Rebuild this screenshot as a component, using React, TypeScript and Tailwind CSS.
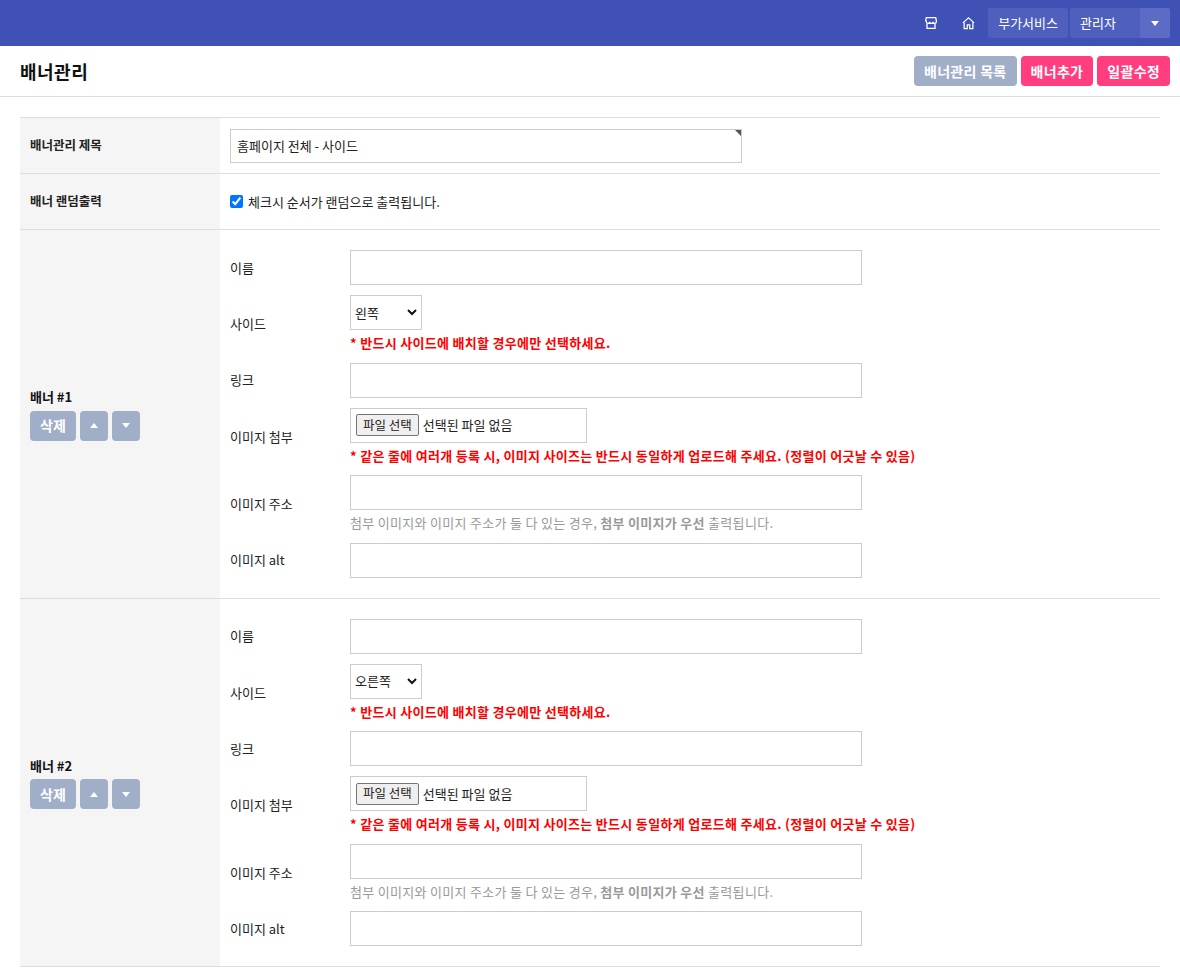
const font = { fontFamily: '"Noto Sans CJK KR", "Noto Sans", sans-serif' }

function Field({ label, children }: { label: string; children: React.ReactNode }) {
  return (
    <div className="flex items-center">
      <div className="w-[120px] text-[13px] text-[#222]">{label}</div>
      <div className="flex flex-col">{children}</div>
    </div>
  )
}

const inputCls = 'w-[512px] h-[35px] border border-[#ccc] bg-white'

function Banner({ n, side }: { n: number; side: string }) {
  return (
    <div className="flex border-b border-[#ddd]">
      <div className="w-[200px] bg-[#f5f5f5] flex flex-col justify-center px-[10px]">
        <div className="text-[13px] font-bold text-[#111]">배너 #{n}</div>
        <div className="flex gap-1 mt-1">
          <button className="h-[30px] px-[10px] rounded bg-[#a0aec8] text-white text-[14px] font-bold">삭제</button>
          <button className="h-[30px] w-[28px] rounded bg-[#a0aec8] text-white flex items-center justify-center">
            <svg width="8" height="5" viewBox="0 0 8 5"><path d="M0 5L4 0L8 5Z" fill="white" /></svg>
          </button>
          <button className="h-[30px] w-[28px] rounded bg-[#a0aec8] text-white flex items-center justify-center">
            <svg width="8" height="5" viewBox="0 0 8 5"><path d="M0 0L4 5L8 0Z" fill="white" /></svg>
          </button>
        </div>
      </div>
      <div className="flex-1 px-[10px] pt-[20px] pb-[20px] flex flex-col gap-[10px]">
        <Field label="이름"><div className={inputCls} /></Field>
        <Field label="사이드">
          <div className="w-[72px] h-[35px] border border-[#ccc] bg-white flex items-center justify-between px-[4px] text-[13px]">
            <span>{side}</span>
            <svg width="10" height="7" viewBox="0 0 10 7"><path d="M1 1L5 5L9 1" stroke="#111" strokeWidth="2" fill="none" /></svg>
          </div>
          <div className="text-[13px] tracking-[0.3px] font-bold text-[#f00] mt-[3px]">* 반드시 사이드에 배치할 경우에만 선택하세요.</div>
        </Field>
        <Field label="링크"><div className={inputCls} /></Field>
        <Field label="이미지 첨부">
          <div className="w-[237px] h-[35px] border border-[#ccc] bg-white flex items-center px-[5px] gap-[4px] text-[13px]">
            <span className="border border-[#767676] bg-[#efefef] rounded-[2px] px-[6px] h-[22px] flex items-center text-[12.5px]">파일 선택</span>
            <span>선택된 파일 없음</span>
          </div>
          <div className="text-[13px] tracking-[0.3px] font-bold text-[#f00] mt-[3px]">* 같은 줄에 여러개 등록 시, 이미지 사이즈는 반드시 동일하게 업로드해 주세요. (정렬이 어긋날 수 있음)</div>
        </Field>
        <Field label="이미지 주소">
          <div className={inputCls} />
          <div className="text-[13px] tracking-[0.3px] text-[#999] mt-[3px]">첨부 이미지와 이미지 주소가 둘 다 있는 경우, <b>첨부 이미지가 우선</b> 출력됩니다.</div>
        </Field>
        <Field label="이미지 alt"><div className={inputCls} /></Field>
      </div>
    </div>
  )
}

export default function App() {
  return (
    <div style={font} className="min-h-[977px] bg-white text-[#222]">
      <div className="h-[46px] bg-[#3f51b5] flex items-center justify-end pr-[10px] gap-[2px]">
        <svg width="16" height="16" viewBox="0 0 24 24" fill="none" stroke="white" strokeWidth="2" className="mr-[20px]"><path d="M4 8l1-4h14l1 4v2a2.5 2.5 0 0 1-5 0a2.5 2.5 0 0 1-5 0a2.5 2.5 0 0 1-5 0Z" /><path d="M6 13v7h12v-7" /></svg>
        <svg width="15" height="15" viewBox="0 0 24 24" fill="none" stroke="white" strokeWidth="2" className="mr-[10px]"><path d="M3 11l9-8 9 8" /><path d="M5 10v10h5v-6h4v6h5V10" /></svg>
        <div className="h-[30px] px-[10px] bg-[#4e5fbd] rounded-[2px] text-white text-[13px] flex items-center">부가서비스</div>
        <div className="h-[30px] flex rounded-[2px] overflow-hidden">
          <div className="w-[70px] bg-[#4e5fbd] text-white text-[13px] flex items-center px-[10px]">관리자</div>
          <div className="w-[30px] bg-[#5c6bc6] flex items-center justify-center">
            <svg width="8" height="5" viewBox="0 0 8 5"><path d="M0 0L4 5L8 0Z" fill="white" /></svg>
          </div>
        </div>
      </div>
      <div className="h-[51px] border-b border-[#ddd] flex items-center justify-between px-[20px]">
        <h1 className="text-[18px] tracking-[0.5px] font-bold text-[#111]">배너관리</h1>
        <div className="flex gap-[4px] -mr-[10px]">
          <button className="h-[30px] px-[10px] rounded bg-[#a0aec8] text-white text-[14px] tracking-[0.3px] font-bold">배너관리 목록</button>
          <button className="h-[30px] px-[10px] rounded bg-[#ff3d7f] text-white text-[14px] tracking-[0.3px] font-bold">배너추가</button>
          <button className="h-[30px] px-[10px] rounded bg-[#ff3d7f] text-white text-[14px] tracking-[0.3px] font-bold">일괄수정</button>
        </div>
      </div>
      <div className="mx-[20px] mt-[20px] border-t border-[#ddd]">
        <div className="flex border-b border-[#ddd] h-[56px]">
          <div className="w-[200px] bg-[#f5f5f5] flex items-center px-[10px] text-[12.5px] font-bold">배너관리 제목</div>
          <div className="flex items-center px-[10px]">
            <div className="relative w-[512px] h-[34px] border border-[#ccc] flex items-center px-[6px] text-[13px]">
              홈페이지 전체 - 사이드
              <div className="absolute top-0 right-0 w-0 h-0 border-t-[6px] border-t-[#555] border-l-[6px] border-l-transparent" />
            </div>
          </div>
        </div>
        <div className="flex border-b border-[#ddd] h-[56px]">
          <div className="w-[200px] bg-[#f5f5f5] flex items-center px-[10px] text-[12.5px] font-bold">배너 랜덤출력</div>
          <div className="flex items-center px-[10px] gap-[5px] text-[13px]">
            <input type="checkbox" defaultChecked className="w-[13px] h-[13px] accent-[#0075ff]" />
            체크시 순서가 랜덤으로 출력됩니다.
          </div>
        </div>
        <Banner n={1} side="왼쪽" />
        <Banner n={2} side="오른쪽" />
      </div>
    </div>
  )
}
